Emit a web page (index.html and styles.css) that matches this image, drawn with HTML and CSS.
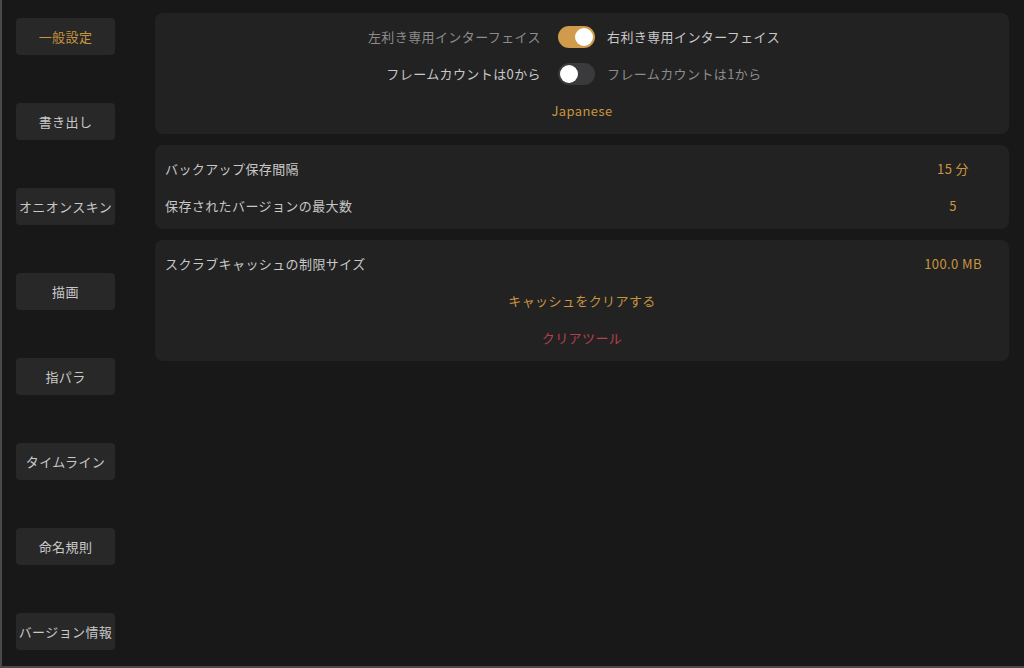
FILE: index.html
```html
<!DOCTYPE html>
<html lang="ja">
<head>
    <meta charset="UTF-8">
    <title>設定</title>
    <link rel="stylesheet" href="styles.css">
</head>
<body>
    <div class="frame">
        <nav class="sidebar">
            <div class="nav-button active">一般設定</div>
            <div class="nav-button">書き出し</div>
            <div class="nav-button">オニオンスキン</div>
            <div class="nav-button">描画</div>
            <div class="nav-button">指パラ</div>
            <div class="nav-button">タイムライン</div>
            <div class="nav-button">命名規則</div>
            <div class="nav-button">バージョン情報</div>
        </nav>

        <main class="content">
            <section class="panel">
                <div class="switch-row">
                    <span class="switch-label left dim">左利き専用インターフェイス</span>
                    <span class="toggle on"><span class="knob"></span></span>
                    <span class="switch-label right">右利き専用インターフェイス</span>
                </div>
                <div class="switch-row">
                    <span class="switch-label left">フレームカウントは0から</span>
                    <span class="toggle"><span class="knob"></span></span>
                    <span class="switch-label right dim">フレームカウントは1から</span>
                </div>
                <div class="action-row accent">Japanese</div>
            </section>

            <section class="panel">
                <div class="value-row">
                    <span class="row-label">バックアップ保存間隔</span>
                    <span class="row-value">15 分</span>
                </div>
                <div class="value-row">
                    <span class="row-label">保存されたバージョンの最大数</span>
                    <span class="row-value">5</span>
                </div>
            </section>

            <section class="panel">
                <div class="value-row">
                    <span class="row-label">スクラブキャッシュの制限サイズ</span>
                    <span class="row-value">100.0 MB</span>
                </div>
                <div class="action-row accent">キャッシュをクリアする</div>
                <div class="action-row danger">クリアツール</div>
            </section>
        </main>
    </div>
</body>
</html>
```

FILE: styles.css
```css
:root {
    --bg-color: #181818;
    --panel-bg: #222222;
    --button-bg: #282828;
    --text-color: #c8c8c8;
    --dim-color: #8c8c8c;
    --accent-color: #c9953f;
    --danger-color: #b8404e;
}

html, body {
    margin: 0;
    height: 100%;
    background: var(--bg-color);
}

body {
    font-family: 'Noto Sans CJK JP', 'Noto Sans', sans-serif;
    font-size: 13px;
    letter-spacing: 0.4px;
    color: var(--text-color);
}

.frame {
    box-sizing: border-box;
    height: 668px;
    display: flex;
    border-left: 2px solid #4a4a4a;
    border-bottom: 2px solid #4a4a4a;
}

.sidebar {
    width: 99px;
    padding: 18px 40px 0 14px;
    display: flex;
    flex-direction: column;
    gap: 48px;
}

.nav-button {
    height: 37px;
    background: var(--button-bg);
    border-radius: 4px;
    display: flex;
    align-items: center;
    justify-content: center;
    white-space: nowrap;
}

.nav-button.active {
    color: var(--accent-color);
}

.content {
    flex: 1;
    padding: 13px 15px 0 0;
    display: flex;
    flex-direction: column;
    gap: 11px;
}

.panel {
    background: var(--panel-bg);
    border-radius: 8px;
    padding: 5px 10px;
}

.switch-row {
    height: 37px;
    display: grid;
    grid-template-columns: 1fr auto 1fr;
    align-items: center;
    column-gap: 12px;
    padding-right: 11px;
}

.switch-label.left {
    text-align: right;
    padding-right: 5px;
}

.dim {
    color: var(--dim-color);
}

.toggle {
    width: 37px;
    height: 22px;
    border-radius: 11px;
    background: #3a3a3c;
    display: flex;
    align-items: center;
    padding: 0 2px;
    box-sizing: border-box;
}

.toggle.on {
    background: #d09b4a;
    justify-content: flex-end;
}

.knob {
    width: 18px;
    height: 18px;
    border-radius: 50%;
    background: #ffffff;
}

.value-row {
    height: 37px;
    display: flex;
    align-items: center;
    justify-content: space-between;
    padding-right: 6px;
}

.row-value {
    width: 80px;
    text-align: center;
    color: var(--accent-color);
}

.action-row {
    height: 37px;
    display: flex;
    align-items: center;
    justify-content: center;
}

.accent {
    color: var(--accent-color);
}

.danger {
    color: var(--danger-color);
}
```
